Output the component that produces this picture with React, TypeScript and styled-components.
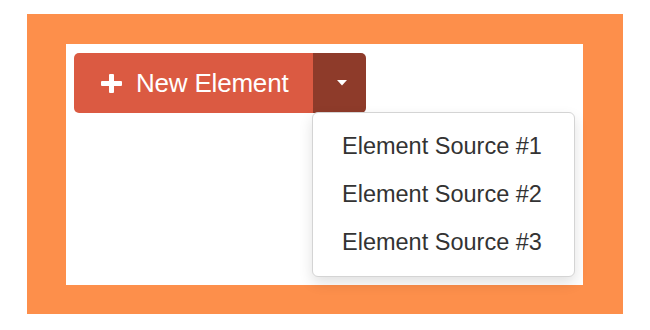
import * as React from 'react';
import styled, { createGlobalStyle } from 'styled-components';

const GlobalStyle = createGlobalStyle`
  html, body {
    margin: 0;
    padding: 0;
    background: #fff;
  }
  body {
    font-family: 'Liberation Sans', Arial, Helvetica, sans-serif;
  }
`;

const Page = styled.div`
  width: 650px;
  height: 330px;
  padding: 14px 27px 16px 27px;
  box-sizing: border-box;
`;

const Frame = styled.div`
  width: 596px;
  height: 300px;
  background: #fd8f4b;
  padding: 30px 40px 29px 39px;
  box-sizing: border-box;
`;

const Panel = styled.div`
  height: 100%;
  background: #fff;
  padding: 9px 8px;
  box-sizing: border-box;
`;

const Group = styled.div`
  position: relative;
  display: inline-flex;
  height: 60px;
`;

const MainButton = styled.button`
  display: flex;
  align-items: center;
  gap: 14px;
  width: 239px;
  height: 60px;
  padding: 0 0 0 27px;
  border: none;
  border-radius: 5px 0 0 5px;
  background: #db5a42;
  color: #fff;
  font-family: 'Liberation Sans', Arial, Helvetica, sans-serif;
  font-size: 26px;
  letter-spacing: -0.2px;
  cursor: pointer;
`;

const ToggleButton = styled.button`
  display: flex;
  align-items: center;
  justify-content: center;
  width: 53px;
  height: 60px;
  padding: 0;
  border: none;
  border-radius: 0 5px 5px 0;
  background: #8e3b2a;
  cursor: pointer;
`;

const Menu = styled.ul`
  position: absolute;
  top: 59px;
  left: 238px;
  width: 263px;
  margin: 0;
  padding: 9px 0 10px;
  list-style: none;
  background: #fff;
  border: 1px solid #d4d4d4;
  border-radius: 6px;
  box-shadow: 0 6px 14px rgba(0, 0, 0, 0.12);
  box-sizing: border-box;
`;

const MenuItem = styled.li`
  height: 48px;
  line-height: 48px;
  padding-left: 29px;
  color: #333;
  font-size: 23.5px;
  white-space: nowrap;
`;

const PlusIcon = () => (
  <svg width='21' height='19' viewBox='0 0 21 19'>
    <rect x='8' y='0' width='5' height='19' rx='1' fill='#fff' />
    <rect x='0' y='7' width='21' height='5' rx='1' fill='#fff' />
  </svg>
);

const Caret = () => (
  <svg width='10' height='6' viewBox='0 0 10 6' style={{ marginLeft: 4 }}>
    <polygon points='0,0 10,0 5,5.5' fill='#fff' />
  </svg>
);

const sources = ['Element Source #1', 'Element Source #2', 'Element Source #3'];

const App = () => (
  <>
    <GlobalStyle />
    <Page>
      <Frame>
        <Panel>
          <Group>
            <MainButton>
              <PlusIcon />
              New Element
            </MainButton>
            <ToggleButton>
              <Caret />
            </ToggleButton>
            <Menu>
              {sources.map((s) => (
                <MenuItem key={s}>{s}</MenuItem>
              ))}
            </Menu>
          </Group>
        </Panel>
      </Frame>
    </Page>
  </>
);

export default App;
